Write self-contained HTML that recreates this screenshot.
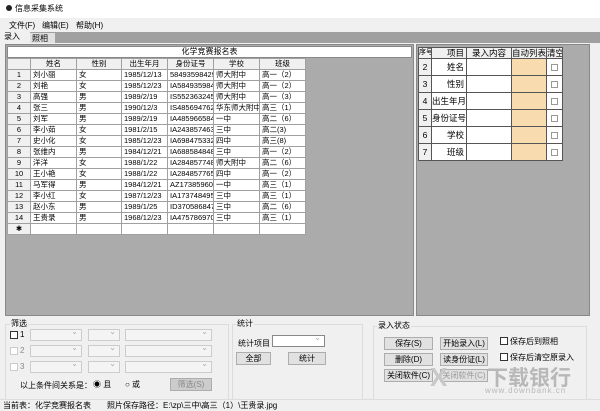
<!DOCTYPE html>
<html><head><meta charset="utf-8"><style>
*{box-sizing:border-box;margin:0;padding:0}
body{width:600px;height:411px;overflow:hidden;background:#f0f0f0;font-family:"Liberation Sans","Noto Sans CJK SC",sans-serif;font-size:8px;color:#000;position:relative}
.a{position:absolute}
table{border-collapse:collapse;table-layout:fixed}
td{border:1px solid #a0a0a0;height:11px;padding:0 2px;white-space:nowrap;overflow:hidden;font-size:7.5px;line-height:10px}
.g td{background:#fff}
.g tr.h td{background:#f0f0f0;text-align:center}
.g td.n{background:#f0f0f0;text-align:center}
.r td{height:17px;border:1px solid #555;font-size:8.5px}
.btn{position:absolute;background:#e1e1e1;border:1px solid #adadad;text-align:center;font-size:8px;line-height:11px;height:13px}
.cb{position:absolute;width:8px;height:8px;border:1px solid #333;background:#fff}
.sel{position:absolute;height:12px;border:1px solid #ccc;background:#f4f4f4}
.sel:after{content:"⌄";position:absolute;right:3px;top:-3px;color:#aaa;font-size:8px}
.gb{position:absolute;border:1px solid #dcdcdc}
.gl{position:absolute;background:#f0f0f0;padding:0 1px;font-size:8px}
</style></head><body>
<div class="a" style="left:0;top:0;width:600px;height:18px;background:#fff"></div>
<div class="a" style="left:6px;top:5px;width:6px;height:6px;border-radius:3px;background:#222"></div>
<div class="a" style="left:15px;top:3px;font-size:8px">信息采集系统</div>
<div class="a" style="left:0;top:18px;width:600px;height:14px;background:#f0f0f0"></div>
<div class="a" style="left:9px;top:20px">文件(F)</div>
<div class="a" style="left:42px;top:20px">编辑(E)</div>
<div class="a" style="left:76px;top:20px">帮助(H)</div>
<div class="a" style="left:0;top:32px;width:600px;height:11px;background:#a0a0a0"></div>
<div class="a" style="left:0;top:31px;width:30px;height:12px;background:#f0f0f0;padding-left:4px">录入</div>
<div class="a" style="left:30px;top:33px;width:25px;height:10px;background:#e0e0e0;padding-left:2px">照相</div>
<div class="a" style="left:0;top:43px;width:600px;height:272px;background:#f0f0f0"></div>
<!-- left grid panel -->
<div class="a" style="left:5px;top:44px;width:409px;height:272px;background:#ababab;border:1px solid #888"></div>
<div class="a" style="left:7px;top:46px;width:405px;height:12px;background:#fff;border:1px solid #888;text-align:center;line-height:10px">化学竞赛报名表</div>
<table class="a g" style="left:7px;top:58px;width:298px">
<colgroup><col style="width:23px"><col style="width:46px"><col style="width:45px"><col style="width:46px"><col style="width:46px"><col style="width:46px"><col style="width:46px"></colgroup>
<tr class="h"><td></td><td>姓名</td><td>性别</td><td>出生年月</td><td>身份证号</td><td>学校</td><td>班级</td></tr>
<tr><td class="n">1</td><td>刘小丽</td><td>女</td><td>1985/12/13</td><td>584935984296</td><td>师大附中</td><td>高一（2）</td></tr>
<tr><td class="n">2</td><td>刘艳</td><td>女</td><td>1985/12/23</td><td>IA58493598429</td><td>师大附中</td><td>高一（2）</td></tr>
<tr><td class="n">3</td><td>高强</td><td>男</td><td>1989/2/19</td><td>IS5523632452</td><td>师大附中</td><td>高一（3）</td></tr>
<tr><td class="n">4</td><td>张三</td><td>男</td><td>1990/12/3</td><td>IS4856947625</td><td>华东师大附中</td><td>高三（1）</td></tr>
<tr><td class="n">5</td><td>刘军</td><td>男</td><td>1989/2/19</td><td>IA4859665847</td><td>一中</td><td>高二（6）</td></tr>
<tr><td class="n">6</td><td>李小茹</td><td>女</td><td>1981/2/15</td><td>IA2438574636</td><td>三中</td><td>高二(3)</td></tr>
<tr><td class="n">7</td><td>史小化</td><td>女</td><td>1985/12/23</td><td>IA6984753321</td><td>四中</td><td>高三(8)</td></tr>
<tr><td class="n">8</td><td>张维内</td><td>男</td><td>1984/12/21</td><td>IA6885848485</td><td>三中</td><td>高一（2）</td></tr>
<tr><td class="n">9</td><td>洋洋</td><td>女</td><td>1988/1/22</td><td>IA2848577484</td><td>师大附中</td><td>高二（6）</td></tr>
<tr><td class="n">10</td><td>王小艳</td><td>女</td><td>1988/1/22</td><td>IA2848577658</td><td>四中</td><td>高一（2）</td></tr>
<tr><td class="n">11</td><td>马军得</td><td>男</td><td>1984/12/21</td><td>AZ1738596070</td><td>一中</td><td>高三（1）</td></tr>
<tr><td class="n">12</td><td>李小红</td><td>女</td><td>1987/12/23</td><td>IA1737484959</td><td>三中</td><td>高三（1）</td></tr>
<tr><td class="n">13</td><td>赵小东</td><td>男</td><td>1989/1/25</td><td>ID3705868473</td><td>三中</td><td>高二（6）</td></tr>
<tr><td class="n">14</td><td>王贵录</td><td>男</td><td>1968/12/23</td><td>IA4757869700</td><td>三中</td><td>高三（1）</td></tr>
<tr><td class="n">✱</td><td></td><td></td><td></td><td></td><td></td><td></td></tr>
</table>
<!-- right panel -->
<div class="a" style="left:416px;top:44px;width:174px;height:272px;background:#ababab;border:1px solid #888"></div>
<table class="a g r" style="left:418px;top:47px;width:144px">
<colgroup><col style="width:13px"><col style="width:35px"><col style="width:45px"><col style="width:35px"><col style="width:16px"></colgroup>
<tr class="h"><td style="height:10px;padding:0;font-size:7px">序号</td><td style="height:10px;text-align:right">项目</td><td style="height:10px">录入内容</td><td style="height:10px;padding:0">自动列表</td><td style="height:10px;padding:0">清空</td></tr>
<tr><td class="n">2</td><td style="text-align:right">姓名</td><td></td><td style="background:#f8dcb0"></td><td><div style="width:7px;height:7px;border:1px solid #999;margin:auto"></div></td></tr>
<tr><td class="n">3</td><td style="text-align:right">性别</td><td></td><td style="background:#f8dcb0"></td><td><div style="width:7px;height:7px;border:1px solid #999;margin:auto"></div></td></tr>
<tr><td class="n">4</td><td style="text-align:right;padding:0">出生年月</td><td></td><td style="background:#f8dcb0"></td><td><div style="width:7px;height:7px;border:1px solid #999;margin:auto"></div></td></tr>
<tr><td class="n">5</td><td style="text-align:right;padding:0">身份证号</td><td></td><td style="background:#f8dcb0"></td><td><div style="width:7px;height:7px;border:1px solid #999;margin:auto"></div></td></tr>
<tr><td class="n">6</td><td style="text-align:right">学校</td><td></td><td style="background:#f8dcb0"></td><td><div style="width:7px;height:7px;border:1px solid #999;margin:auto"></div></td></tr>
<tr><td class="n">7</td><td style="text-align:right">班级</td><td></td><td style="background:#f8dcb0"></td><td><div style="width:7px;height:7px;border:1px solid #999;margin:auto"></div></td></tr>
</table>
<!-- 筛选 -->
<div class="gb" style="left:5px;top:324px;width:224px;height:76px"></div>
<div class="gl" style="left:10px;top:318px">筛选</div>
<div class="cb" style="left:10px;top:331px"></div><div class="a" style="left:20px;top:330px">1</div>
<div class="cb" style="left:10px;top:347px;border-color:#ccc"></div><div class="a" style="left:20px;top:346px;color:#888">2</div>
<div class="cb" style="left:10px;top:363px;border-color:#ccc"></div><div class="a" style="left:20px;top:362px;color:#888">3</div>
<div class="sel" style="left:30px;top:329px;width:52px"></div><div class="sel" style="left:88px;top:329px;width:32px"></div><div class="sel" style="left:125px;top:329px;width:87px"></div>
<div class="sel" style="left:30px;top:345px;width:52px"></div><div class="sel" style="left:88px;top:345px;width:32px"></div><div class="sel" style="left:125px;top:345px;width:87px"></div>
<div class="sel" style="left:30px;top:361px;width:52px"></div><div class="sel" style="left:88px;top:361px;width:32px"></div><div class="sel" style="left:125px;top:361px;width:87px"></div>
<div class="a" style="left:20px;top:380px">以上条件间关系是：</div>
<div class="a" style="left:93px;top:379px">◉ 且</div>
<div class="a" style="left:125px;top:379px">○ 或</div>
<div class="btn" style="left:170px;top:378px;width:42px;color:#888;background:#ccc">筛选(S)</div>
<!-- 统计 -->
<div class="gb" style="left:232px;top:324px;width:131px;height:76px"></div>
<div class="gl" style="left:236px;top:318px">统计</div>
<div class="a" style="left:238px;top:338px">统计项目</div>
<div class="sel" style="left:272px;top:335px;width:53px;background:#fff;border-color:#888"></div>
<div class="btn" style="left:236px;top:352px;width:35px">全部</div>
<div class="btn" style="left:288px;top:352px;width:38px">统计</div>
<!-- 录入状态 -->
<div class="gb" style="left:373px;top:326px;width:214px;height:74px"></div>
<div class="gl" style="left:377px;top:320px">录入状态</div>
<div class="btn" style="left:384px;top:337px;width:49px">保存(S)</div>
<div class="btn" style="left:440px;top:337px;width:48px">开始录入(L)</div>
<div class="btn" style="left:384px;top:353px;width:49px">删除(D)</div>
<div class="btn" style="left:440px;top:353px;width:48px">读身份证(L)</div>
<div class="btn" style="left:384px;top:369px;width:49px">关闭软件(C)</div>
<div class="btn" style="left:440px;top:369px;width:48px;color:#999">关闭软件(C)</div>
<div class="cb" style="left:500px;top:337px"></div><div class="a" style="left:510px;top:336px">保存后到照相</div>
<div class="cb" style="left:500px;top:353px"></div><div class="a" style="left:510px;top:352px">保存后清空原录入</div>
<div class="a" style="left:487px;top:362px;font-size:21px;color:#b8b8b8;font-weight:bold">下载银行</div>
<div class="a" style="left:485px;top:386px;font-size:8px;color:#b8b8b8;letter-spacing:1px">www.downbank.cn</div>
<div class="a" style="left:430px;top:362px;font-size:26px;color:#c8c8c8;font-weight:bold">X</div>
<!-- status -->
<div class="a" style="left:0;top:399px;width:600px;height:12px;background:#f0f0f0;border-top:1px solid #ddd"></div>
<div class="a" style="left:3px;top:400px">当前表：化学竞赛报名表</div>
<div class="a" style="left:107px;top:400px">照片保存路径：E:\zp\三中\高三（1）\王贵录.jpg</div>
</body></html>
